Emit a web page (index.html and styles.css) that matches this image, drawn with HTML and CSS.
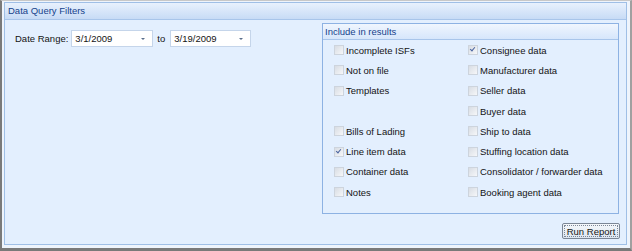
FILE: index.html
```html
<!DOCTYPE html>
<html lang="en">
<head>
    <meta charset="UTF-8">
    <title>Data Query Filters</title>
    <link rel="stylesheet" href="styles.css">
</head>
<body>
    <div class="frame">
        <div class="panel">
            <div class="panel-title">Data Query Filters</div>
            <div class="panel-body">
                <div class="main">
                    <div class="date-range">
                        <span class="label">Date Range:</span>
                        <div class="combo"><span>3/1/2009</span><span class="arrow"></span></div>
                        <span class="to">to</span>
                        <div class="combo combo-to"><span>3/19/2009</span><span class="arrow"></span></div>
                    </div>

                    <!-- Include in results -->
                    <div class="group">
                        <div class="group-title">Include in results</div>
                        <div class="group-body">
                            <div class="col">
                                <label class="check"><span class="box"></span>Incomplete ISFs</label>
                                <label class="check"><span class="box"></span>Not on file</label>
                                <label class="check"><span class="box"></span>Templates</label>
                                <div class="check spacer"></div>
                                <label class="check"><span class="box"></span>Bills of Lading</label>
                                <label class="check"><span class="box checked"></span>Line item data</label>
                                <label class="check"><span class="box"></span>Container data</label>
                                <label class="check"><span class="box"></span>Notes</label>
                            </div>
                            <div class="col">
                                <label class="check"><span class="box checked"></span>Consignee data</label>
                                <label class="check"><span class="box"></span>Manufacturer data</label>
                                <label class="check"><span class="box"></span>Seller data</label>
                                <label class="check"><span class="box"></span>Buyer data</label>
                                <label class="check"><span class="box"></span>Ship to data</label>
                                <label class="check"><span class="box"></span>Stuffing location data</label>
                                <label class="check"><span class="box"></span>Consolidator / forwarder data</label>
                                <label class="check"><span class="box"></span>Booking agent data</label>
                            </div>
                        </div>
                    </div>
                </div>
                <div class="footer">
                    <button class="run">Run Report</button>
                </div>
            </div>
        </div>
    </div>
</body>
</html>
```

FILE: styles.css
```css
body {
    margin: 0;
    font-family: Tahoma, "Liberation Sans", Arial, sans-serif;
    font-size: 9.5px;
    color: #141414;
    background-color: #ffffff;
}
.frame {
    width: 632px;
    height: 251px;
    box-sizing: border-box;
    border-left: 2px solid #7a7a7a;
    border-bottom: 3px solid #7a7a7a;
    border-top: 1px solid #c8c8c8;
    border-right: 2px solid #a0a0a0;
    background-color: #eef4fc;
    padding: 1px 3px 3px 2px;
}
.panel {
    height: 100%;
    box-sizing: border-box;
    border: 1px solid #9fbfe6;
    background-color: #e3effe;
    display: flex;
    flex-direction: column;
}
.panel-title {
    height: 16px;
    line-height: 16px;
    padding-left: 3px;
    color: #15428b;
    white-space: nowrap;
    background: linear-gradient(to bottom, #e8f1fd, #c7dbf5);
    border-bottom: 1px solid #a8c5ea;
}
.panel-body {
    flex: 1;
    display: flex;
    flex-direction: column;
    padding: 3px 6px 5px 10px;
}
.main {
    display: flex;
    justify-content: space-between;
}
.date-range {
    display: flex;
    align-items: center;
    height: 19px;
    margin-top: 6px;
    white-space: nowrap;
}
.label {
    margin-right: 3px;
}
.combo {
    width: 82px;
    height: 17px;
    box-sizing: border-box;
    border: 1px solid #c5d5ea;
    background-color: #ffffff;
    display: flex;
    align-items: center;
    justify-content: space-between;
    padding: 0 7px 0 3px;
}
.combo-to {
    width: 81px;
}
.arrow {
    width: 0;
    height: 0;
    border-left: 2px solid transparent;
    border-right: 2px solid transparent;
    border-top: 2px solid #5a6f8c;
}
.to {
    margin: 0 5px 0 4px;
}
.group {
    width: 297px;
    height: 191px;
    margin-right: 1px;
    box-sizing: border-box;
    border: 1px solid #8db2e3;
    background-color: #e3effe;
}
.group-title {
    height: 15px;
    line-height: 15px;
    padding-left: 2px;
    color: #15428b;
    white-space: nowrap;
    background: linear-gradient(to bottom, #f0f6fe, #d6e6fb);
    border-bottom: 1px solid #a8c5ea;
}
.group-body {
    display: flex;
    padding: 0 0 0 11px;
}
.col {
    display: flex;
    flex-direction: column;
}
.col:first-child {
    width: 134px;
}
.check {
    height: 20.3px;
    display: flex;
    align-items: center;
    white-space: nowrap;
}
.box {
    width: 10px;
    height: 10px;
    flex-shrink: 0;
    box-sizing: border-box;
    border: 1px solid #cdd4dd;
    background: linear-gradient(135deg, #d8dde4, #f6f7f9);
    margin-right: 2px;
    position: relative;
}
.box.checked::after {
    content: "";
    position: absolute;
    left: 2px;
    top: 0px;
    width: 2px;
    height: 4px;
    border: solid #4a64a0;
    border-width: 0 1.5px 1.5px 0;
    transform: rotate(40deg);
}
.footer {
    display: flex;
    justify-content: flex-end;
    margin-top: auto;
}
.run {
    width: 58px;
    height: 16px;
    padding: 0;
    font-family: inherit;
    font-size: 9.5px;
    white-space: nowrap;
    color: #141414;
    border: 1px solid #7b8696;
    outline: 1px dotted #7b8696;
    outline-offset: -3px;
    border-radius: 2px;
    background: linear-gradient(to bottom, #f4f7fb, #dde6f1);
}
```
